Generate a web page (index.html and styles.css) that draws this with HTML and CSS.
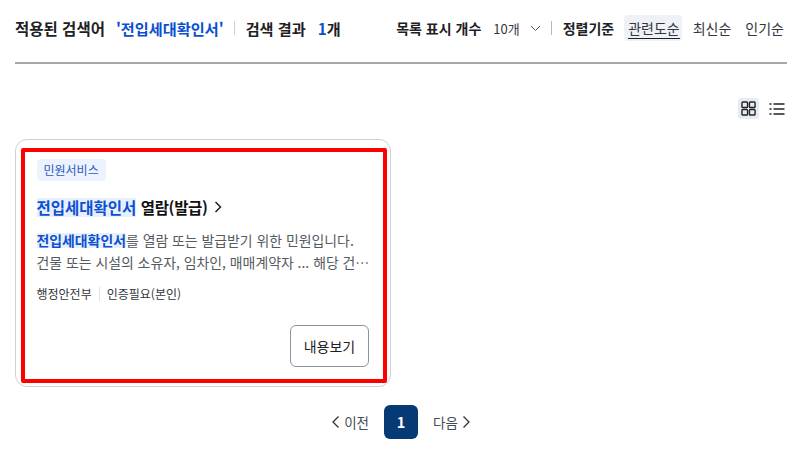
FILE: index.html
```html
<!DOCTYPE html>
<html lang="ko">

<head>
    <meta charset="UTF-8">
    <title>검색 결과</title>
    <link rel="stylesheet" href="styles.css">
</head>

<body>
    <div class="result-bar">
        <div class="summary">
            <span class="lead">적용된 검색어</span>
            <span class="keyword">'전입세대확인서'</span>
            <span class="bar-sep"></span>
            <span>검색 결과</span>
            <span class="count"><em>1</em>개</span>
        </div>
        <div class="options">
            <span class="opt-title">목록 표시 개수</span>
            <span class="per-page">10개
                <svg width="11" height="7" viewBox="0 0 11 7"><path d="M1 1l4.500 4.500L10 1" fill="none" stroke="#555" stroke-width="1"/></svg>
            </span>
            <span class="opt-sep"></span>
            <span class="opt-title">정렬기준</span>
            <a class="sort active"><span>관련도순</span></a>
            <a class="sort">최신순</a>
            <a class="sort">인기순</a>
        </div>
    </div>

    <div class="view-btns">
        <span class="view-btn on">
            <svg width="15" height="15" viewBox="0 0 16 16" fill="none" stroke="#222" stroke-width="1.500">
                <rect x="1" y="1" width="6" height="6" rx="1"/><rect x="9" y="1" width="6" height="6" rx="1"/>
                <rect x="1" y="9" width="6" height="6" rx="1"/><rect x="9" y="9" width="6" height="6" rx="1"/>
            </svg>
        </span>
        <span class="view-btn">
            <svg width="16" height="16" viewBox="0 0 16 16" fill="none" stroke="#222" stroke-width="1.300">
                <path d="M0.500 3h2M4.500 3h11M0.500 8h2M4.500 8h11M0.500 13h2M4.500 13h11"/>
            </svg>
        </span>
    </div>

    <div class="card">
        <div class="card-inner">
            <span class="tag">민원서비스</span>
            <h3 class="card-title"><span><mark>전입세대확인서</mark> <span class="title-rest">열람(발급)</span></span>
                <svg width="8" height="12" viewBox="0 0 8 12"><path d="M1.500 1l5 5-5 5" fill="none" stroke="#1e2124" stroke-width="1.500"/></svg>
            </h3>
            <p class="card-desc"><mark>전입세대확인서</mark>를 열람 또는 발급받기 위한 민원입니다.<br>건물 또는 시설의 소유자, 임차인, 매매계약자 ... 해당 건⋯</p>
            <div class="meta">
                <span>행정안전부</span>
                <span class="meta-sep"></span>
                <span>인증필요(본인)</span>
            </div>
            <div class="card-foot">
                <a class="btn">내용보기</a>
            </div>
        </div>
    </div>

    <div class="pager">
        <a class="pg-link">
            <svg width="7" height="12" viewBox="0 0 7 12"><path d="M6.500 .5L1 6l5.500 5.500" fill="none" stroke="#333" stroke-width="1.300"/></svg>
            이전
        </a>
        <a class="pg-num">1</a>
        <a class="pg-link">
            다음
            <svg width="7" height="12" viewBox="0 0 7 12"><path d="M.5 .5L6 6l-5.500 5.500" fill="none" stroke="#333" stroke-width="1.300"/></svg>
        </a>
    </div>
</body>

</html>
```

FILE: styles.css
```css
* {
    margin: 0;
    padding: 0;
    box-sizing: border-box;
}

body {
    width: 800px;
    height: 459px;
    overflow: hidden;
    background: #fff;
    padding: 0 13px 0 15px;
    font-family: "Noto Sans CJK KR", "Noto Sans", sans-serif;
    color: #1e2124;
}

.result-bar {
    height: 64px;
    border-bottom: 2px solid #a8a8a8;
    display: flex;
    justify-content: space-between;
    align-items: center;
    padding: 0 3px 6px 0;
}

.summary {
    display: flex;
    align-items: center;
    font-size: 15.200px;
    font-weight: 700;
    white-space: nowrap;
}

.lead {
    font-size: 15.500px;
}

.keyword {
    color: #0b50d0;
    margin-left: 11px;
}

.bar-sep {
    width: 1px;
    height: 14px;
    background: #cdd1d5;
    margin: 0 11px 0 10px;
}

.count {
    margin-left: 12px;
}

.count em {
    font-style: normal;
    color: #0b50d0;
}

.options {
    display: flex;
    align-items: center;
    font-size: 14px;
    white-space: nowrap;
}

.opt-title {
    font-weight: 700;
}

.per-page {
    display: flex;
    align-items: center;
    gap: 10px;
    margin-left: 12px;
    font-size: 13px;
    color: #33363d;
}

.opt-sep {
    width: 1px;
    height: 14px;
    background: #b1b8be;
    margin: 0 11px 0 10px;
}

.sort {
    margin-left: 14px;
    height: 26px;
    line-height: 26px;
    color: #33363d;
}

.sort.active {
    margin-left: 10px;
    padding: 0 2px 0 4px;
    margin-right: -3px;
    background: #eef2f7;
    border-radius: 4px;
}

.sort.active span {
    display: inline-block;
    height: 24px;
    line-height: 26px;
    border-bottom: 1.500px solid #1e2124;
}

.view-btns {
    display: flex;
    justify-content: flex-end;
    gap: 7px;
    margin-top: 34px;
}

.view-btn {
    width: 21px;
    height: 21px;
    display: flex;
    align-items: center;
    justify-content: center;
    border-radius: 3px;
}

.view-btn.on {
    background: #e6ecf3;
}

.card {
    width: 376px;
    height: 248px;
    margin-top: 20px;
    border: 1px solid #cdd1d5;
    border-radius: 12px;
    padding: 8px 3px 3px 5px;
}

.card-inner {
    height: 100%;
    border: 4.500px solid #ff0000;
    border-radius: 2px;
    padding: 7px 14px 12px 11.500px;
    display: flex;
    flex-direction: column;
    align-items: flex-start;
}

.tag {
    height: 22px;
    line-height: 21px;
    padding: 0 7px;
    font-size: 12px;
    color: #2a5bc0;
    background: #ecf2fe;
    border-radius: 4px;
}

.card-title {
    margin-top: 14px;
    font-size: 15.500px;
    line-height: 24px;
    font-weight: 700;
    color: #111;
    display: flex;
    align-items: center;
    gap: 6px;
}

.title-rest {
    letter-spacing: -0.300px;
}

mark {
    display: inline-block;
    background: #e8f0fe;
    color: #0b50d0;
    font-weight: 700;
}

.card-title mark {
    line-height: 19px;
}

.card-desc {
    margin-top: 10px;
    font-size: 13.900px;
    line-height: 22px;
    color: #555a60;
    white-space: nowrap;
}

.card-desc mark {
    line-height: 15px;
}

.meta {
    display: flex;
    align-items: center;
    margin-top: 12px;
    font-size: 12px;
    color: #33363d;
}

.meta-sep {
    width: 1px;
    height: 14px;
    background: #dfe1e4;
    margin: 0 7px;
}

.card-foot {
    margin-top: auto;
    align-self: flex-end;
}

.btn {
    display: block;
    width: 79px;
    height: 42px;
    line-height: 40px;
    text-align: center;
    font-size: 14px;
    border: 1px solid #8a949e;
    border-radius: 6px;
}

.pager {
    display: flex;
    justify-content: center;
    align-items: center;
    margin-top: 18px;
    font-size: 13.500px;
    color: #464c53;
}

.pg-link {
    display: flex;
    align-items: center;
    gap: 5px;
}

.pg-num {
    width: 34px;
    height: 34px;
    line-height: 33px;
    margin: 0 15px;
    text-align: center;
    background: #063a74;
    color: #fff;
    font-weight: 700;
    font-size: 14.500px;
    border-radius: 6px;
}
```
